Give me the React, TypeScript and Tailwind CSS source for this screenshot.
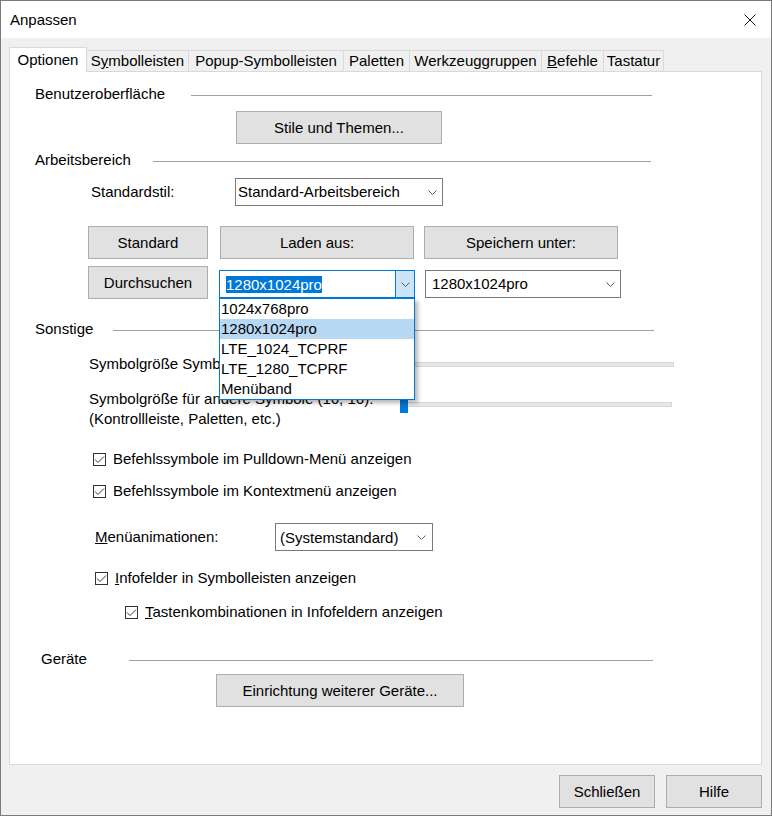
import React from "react";

const Chevron = () => (
  <svg width="9" height="5" viewBox="0 0 9 5" className="shrink-0">
    <path d="M0.5 0.5 L4.5 4.5 L8.5 0.5" fill="none" stroke="#5a5a5a" strokeWidth="1" />
  </svg>
);

const CheckBox = () => (
  <span className="w-[13px] h-[13px] border border-[#333333] bg-white shrink-0 flex items-center justify-center">
    <svg width="11" height="11" viewBox="0 0 11 11">
      <path d="M1 5.5 L4 8.5 L10 2.5" fill="none" stroke="#333333" strokeWidth="1" />
    </svg>
  </span>
);

function Btn({ children, className = "" }: { children: React.ReactNode; className?: string }) {
  return (
    <button
      type="button"
      className={`flex items-center justify-center h-[33px] bg-[#e1e1e1] border border-[#adadad] shrink-0 ${className}`}
    >
      {children}
    </button>
  );
}

function Select({ value, className = "" }: { value: string; className?: string }) {
  return (
    <div className={`flex items-center justify-between h-[28px] bg-white border border-[#7a7a7a] shrink-0 ${className}`}>
      <span>{value}</span>
      <Chevron />
    </div>
  );
}

// group caption with a rule running to the right
function Section({ label, className = "", labelClass = "", lineClass = "" }: {
  label: string;
  className?: string;
  labelClass?: string;
  lineClass?: string;
}) {
  return (
    <div className={`flex items-center h-[20px] ${className}`}>
      <span className={`shrink-0 ${labelClass}`}>{label}</span>
      <div className={`flex-1 h-px bg-[#a0a0a0] mt-[2px] ${lineClass}`} />
    </div>
  );
}

const TABS = [
  { id: "opt", w: "w-[78px]" },
  { id: "sym", w: "w-[103px]" },
  { id: "pop", w: "w-[156px]" },
  { id: "pal", w: "w-[67px]" },
  { id: "wzg", w: "w-[133px]" },
  { id: "bef", w: "w-[63px]" },
  { id: "tas", w: "w-[61px]" },
];

function TabLabel({ id }: { id: string }) {
  switch (id) {
    case "opt":
      return <>Optionen</>;
    case "sym":
      return (
        <>
          S<span className="underline">y</span>mbolleisten
        </>
      );
    case "pop":
      return <>Popup-Symbolleisten</>;
    case "pal":
      return <>Paletten</>;
    case "wzg":
      return <>Werkzeuggruppen</>;
    case "bef":
      return (
        <>
          <span className="underline">B</span>efehle
        </>
      );
    default:
      return <>Tastatur</>;
  }
}

const LAYOUTS = ["1024x768pro", "1280x1024pro", "LTE_1024_TCPRF", "LTE_1280_TCPRF", "Menüband"];

export default function App() {
  return (
    <div className="w-[772px] h-[816px] bg-[#f0f0f0] border border-[#7a7a7a] flex flex-col overflow-hidden font-['Liberation_Sans',Arial,sans-serif] text-[15px] leading-[20px] text-black">
      {/* title bar */}
      <div className="h-[37px] bg-white flex items-center justify-between pl-[9px] pr-[15px] shrink-0">
        <span>Anpassen</span>
        <svg width="12" height="12" viewBox="0 0 12 12">
          <path d="M0.5 0.5 L11.5 11.5 M11.5 0.5 L0.5 11.5" stroke="#111" strokeWidth="1" />
        </svg>
      </div>

      {/* tabs */}
      <div className="flex items-end h-[25px] mt-[9px] ml-[8px] shrink-0">
        {TABS.map((t, i) =>
          i === 0 ? (
            <div
              key={t.id}
              className={`${t.w} h-[25px] bg-white border-t border-l border-r border-[#d9d9d9] relative z-10 flex items-center justify-center`}
            >
              <TabLabel id={t.id} />
            </div>
          ) : (
            <div
              key={t.id}
              className={`${t.w} h-[21px] mb-px -ml-px border-t border-l border-r border-[#d9d9d9] flex items-center justify-center`}
            >
              <TabLabel id={t.id} />
            </div>
          )
        )}
      </div>

      {/* panel */}
      <div className="ml-[8px] w-[753px] h-[694px] -mt-px bg-white border border-[#d9d9d9] flex flex-col shrink-0">
        <Section label="Benutzeroberfläche" className="mt-[12px] pl-[25px]" labelClass="w-[156px]" lineClass="mr-[109px]" />
        <Btn className="mt-[7px] ml-[226px] w-[206px]">Stile und Themen...</Btn>

        <Section label="Arbeitsbereich" className="mt-[6px] pl-[25px]" labelClass="w-[118px]" lineClass="mr-[110px]" />
        <div className="flex items-center mt-[8px] pl-[81px]">
          <span className="w-[144px] shrink-0">Standardstil:</span>
          <Select value="Standard-Arbeitsbereich" className="w-[208px] pl-[2px] pr-[5px]" />
        </div>

        <div className="flex mt-[20px] pl-[78px]">
          <Btn className="w-[120px]">Standard</Btn>
          <Btn className="w-[194px] ml-[12px]">Laden aus:</Btn>
          <Btn className="w-[194px] ml-[10px]">Speichern unter:</Btn>
        </div>

        <div className="flex items-start mt-[7px] pl-[78px] relative z-20">
          <Btn className="w-[120px]">Durchsuchen</Btn>
          <div className="relative ml-[11px] mt-[4px] w-[196px] h-[28px] shrink-0">
            <div className="flex h-full border border-[#0078d7] bg-white">
              <div className="flex-1 flex items-center pl-[6px] pt-[1px]">
                <span className="bg-[#0078d7] text-white leading-[17px] h-[17px]">1280x1024pro</span>
              </div>
              <div className="w-[19px] bg-[#cce4f7] border-l border-[#0078d7] flex items-center justify-center">
                <Chevron />
              </div>
            </div>
            {/* open list */}
            <div className="absolute left-0 top-[28px] w-[196px] bg-white border border-[#0078d7] shadow-[3px_3px_4px_rgba(0,0,0,0.28)]">
              {LAYOUTS.map((l) => (
                <div key={l} className={`h-[20px] pl-[1px] ${l === "1280x1024pro" ? "bg-[#b7d8f3]" : ""}`}>
                  {l}
                </div>
              ))}
            </div>
          </div>
          <Select value="1280x1024pro" className="ml-[10px] mt-[4px] w-[196px] pl-[6px] pr-[5px]" />
        </div>

        <Section label="Sonstige" className="mt-[20px] pl-[25px]" labelClass="w-[78px]" lineClass="mr-[107px]" />
        <div className="flex items-start mt-[15px] pl-[79px] h-[20px]">
          <span className="w-[311px] shrink-0 whitespace-nowrap overflow-hidden">Symbolgröße Symbolleisten (32, 32):</span>
          <div className="relative w-[274px] h-[20px]">
            <div className="mt-[8px] h-[5px] bg-[#e7e7e7] border border-[#d6d6d6]" />
            <div className="absolute left-0 top-[1px] w-[8px] h-[20px] bg-[#0078d7]" />
          </div>
        </div>
        <div className="flex items-start mt-[15px] pl-[79px]">
          <span className="w-[311px] shrink-0">
            Symbolgröße für andere Symbole (16, 16):
            <br />
            (Kontrollleiste, Paletten, etc.)
          </span>
          <div className="relative w-[272px] h-[24px]">
            <div className="mt-[13px] h-[5px] bg-[#e7e7e7] border border-[#d6d6d6]" />
            <div className="absolute left-0 top-[4px] w-[8px] h-[20px] bg-[#0078d7]" />
          </div>
        </div>

        <div className="flex items-center gap-[7px] mt-[20px] pl-[83px] h-[20px]">
          <CheckBox />
          <span>Befehlssymbole im Pulldown-Menü anzeigen</span>
        </div>
        <div className="flex items-center gap-[7px] mt-[12px] pl-[83px] h-[20px]">
          <CheckBox />
          <span>Befehlssymbole im Kontextmenü anzeigen</span>
        </div>

        <div className="flex items-center mt-[22px] pl-[85px]">
          <span className="w-[180px] shrink-0">
            <span className="underline">M</span>enüanimationen:
          </span>
          <Select value="(Systemstandard)" className="w-[158px] pl-[4px] pr-[6px] pt-[1px]" />
        </div>

        <div className="flex items-center gap-[7px] mt-[17px] pl-[85px] h-[20px]">
          <CheckBox />
          <span>
            <span className="underline">I</span>nfofelder in Symbolleisten anzeigen
          </span>
        </div>
        <div className="flex items-center gap-[7px] mt-[14px] pl-[115px] h-[20px]">
          <CheckBox />
          <span>
            <span className="underline">T</span>astenkombinationen in Infofeldern anzeigen
          </span>
        </div>

        <Section label="Geräte" className="mt-[27px] pl-[31px]" labelClass="w-[88px]" lineClass="mr-[108px]" />
        <Btn className="mt-[5px] ml-[206px] w-[248px]">Einrichtung weiterer Geräte...</Btn>
      </div>

      {/* dialog buttons */}
      <div className="flex justify-end gap-[11px] mt-[10px] pr-[9px]">
        <Btn className="w-[96px] h-[31px]">Schließen</Btn>
        <Btn className="w-[96px] h-[31px]">Hilfe</Btn>
      </div>
    </div>
  );
}
